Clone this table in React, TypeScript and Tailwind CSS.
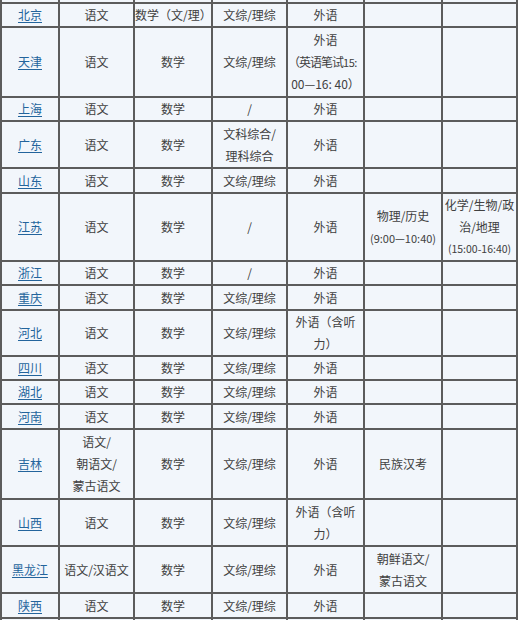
import React from "react";

type Cell = { lines: React.ReactNode[] };
type Row = { p: string; h: number; lh?: string; c: (string | string[] | Cell)[] };

const rows: Row[] = [
  { p: "北京", h: 24, c: ["语文", "数学（文/理）", "文综/理综", "外语", "", ""] },
  {
    p: "天津",
    h: 70,
    c: [
      "语文",
      "数学",
      "文综/理综",
      {
        lines: [
          "外语",
          <span className="ml-[-6px] tracking-[-1px]">
            （英语笔试<span className="text-[11px] tracking-[-0.5px]">15:</span>
          </span>,
          "00—16: 40）",
        ],
      },
      "",
      "",
    ],
  },
  { p: "上海", h: 24, c: ["语文", "数学", "/", "外语", "", ""] },
  { p: "广东", h: 47, c: ["语文", "数学", ["文科综合/", "理科综合"], "外语", "", ""] },
  { p: "山东", h: 25, c: ["语文", "数学", "文综/理综", "外语", "", ""] },
  {
    p: "江苏",
    h: 68,
    c: [
      "语文",
      "数学",
      "/",
      "外语",
      { lines: ["物理/历史", <span className="align-top text-[11px]">(9:00—10:40)</span>] },
      { lines: ["化学/生物/政", "治/地理", <span className="align-top text-[10.5px]">(15:00-16:40)</span>] },
    ],
  },
  { p: "浙江", h: 24, c: ["语文", "数学", "/", "外语", "", ""] },
  { p: "重庆", h: 25, c: ["语文", "数学", "文综/理综", "外语", "", ""] },
  { p: "河北", h: 45, lh: "leading-[21.5px]", c: ["语文", "数学", "文综/理综", ["外语（含听", "力）"], "", ""] },
  { p: "四川", h: 24, c: ["语文", "数学", "文综/理综", "外语", "", ""] },
  { p: "湖北", h: 24, c: ["语文", "数学", "文综/理综", "外语", "", ""] },
  { p: "河南", h: 25, c: ["语文", "数学", "文综/理综", "外语", "", ""] },
  { p: "吉林", h: 70, c: [["语文/", "朝语文/", "蒙古语文"], "数学", "文综/理综", "外语", "民族汉考", ""] },
  { p: "山西", h: 47, c: ["语文", "数学", "文综/理综", ["外语（含听", "力）"], "", ""] },
  { p: "黑龙江", h: 47, c: ["语文/汉语文", "数学", "文综/理综", "外语", ["朝鲜语文/", "蒙古语文"], ""] },
  { p: "陕西", h: 25, c: ["语文", "数学", "文综/理综", "外语", "", ""] },
];

const widths = [58, 75, 78, 75, 77, 78, 75];

function renderCell(c: string | string[] | Cell) {
  if (typeof c === "string") return c;
  const lines = Array.isArray(c) ? c : c.lines;
  return lines.map((l, i) => (
    <div key={i} className="h-[22px] whitespace-nowrap">
      {l}
    </div>
  ));
}

const td = "border-2 border-[#5c5c5c] bg-[#f2f6fb] p-0 text-center align-middle";

export default function App() {
  return (
    <div
      className="w-[521px] h-[620px] overflow-hidden bg-white text-[12px] leading-[22px] text-[#404040]"
      style={{ fontFamily: '"Noto Sans CJK SC", "Noto Sans", sans-serif' }}
    >
      <table className="-mt-[22px] w-[518px] table-fixed border-collapse">
        <colgroup>
          {widths.map((w, i) => (
            <col key={i} style={{ width: w }} />
          ))}
        </colgroup>
        <tbody>
          <tr className="h-[24px]">
            {widths.map((_, i) => (
              <td key={i} className={td}></td>
            ))}
          </tr>
          {rows.map((r) => (
            <tr key={r.p} style={{ height: r.h }} className={r.lh}>
              <td className={td}>
                <a href="#" className="text-[#23649c] underline underline-offset-2">
                  {r.p}
                </a>
              </td>
              {r.c.map((c, i) => (
                <td key={i} className={td}>
                  {renderCell(c)}
                </td>
              ))}
            </tr>
          ))}
          <tr className="h-[24px]">
            {widths.map((_, i) => (
              <td key={i} className={td}></td>
            ))}
          </tr>
        </tbody>
      </table>
    </div>
  );
}
